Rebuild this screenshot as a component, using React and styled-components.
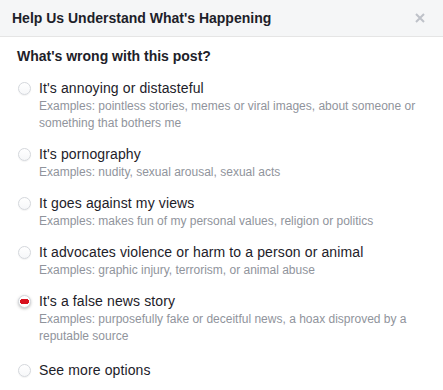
import React from "react";
import styled, { createGlobalStyle } from "styled-components";

const GlobalStyle = createGlobalStyle`
  html, body {
    margin: 0;
    padding: 0;
    background: #fff;
  }
  body {
    font-family: "Liberation Sans", Arial, sans-serif;
    -webkit-font-smoothing: antialiased;
  }
`;

const options = [
    {
        label: "It's annoying or distasteful",
        desc: "Examples: pointless stories, memes or viral images, about someone or something that bothers me",
    },
    { label: "It's pornography", desc: "Examples: nudity, sexual arousal, sexual acts" },
    {
        label: "It goes against my views",
        desc: "Examples: makes fun of my personal values, religion or politics",
    },
    {
        label: "It advocates violence or harm to a person or animal",
        desc: "Examples: graphic injury, terrorism, or animal abuse",
    },
    {
        label: "It's a false news story",
        desc: "Examples: purposefully fake or deceitful news, a hoax disproved by a reputable source",
        checked: true,
    },
    { label: "See more options" },
];

function App() {
    return (
        <Dialog>
            <GlobalStyle />
            <Header>
                <Title>Help Us Understand What's Happening</Title>
                <Close aria-label="Close">
                    <svg width="10" height="10" viewBox="0 0 10 10">
                        <path d="M1 1L9 9M9 1L1 9" stroke="#bec2c9" strokeWidth="2" />
                    </svg>
                </Close>
            </Header>
            <Body>
                <Question>What's wrong with this post?</Question>
                <List>
                    {options.map((o) => (
                        <Option key={o.label} last={!o.desc}>
                            <Radio checked={o.checked} />
                            <Texts>
                                <Label>{o.label}</Label>
                                {o.desc && <Desc>{o.desc}</Desc>}
                            </Texts>
                        </Option>
                    ))}
                </List>
            </Body>
        </Dialog>
    );
}

const Dialog = styled.div`
    width: 443px;
    height: 390px;
    background: #fff;
    overflow: hidden;
`;

const Header = styled.div`
    height: 37px;
    box-sizing: border-box;
    background: #f5f6f7;
    border-bottom: 1px solid #e5e5e5;
    display: flex;
    align-items: center;
    justify-content: space-between;
    padding: 0 12px;
`;

const Title = styled.div`
    font-size: 14px;
    font-weight: bold;
    color: #1d2129;
`;

const Close = styled.div`
    width: 12px;
    height: 12px;
    display: flex;
    align-items: center;
    justify-content: center;
    margin-right: 5px;
`;

const Body = styled.div`
    padding: 10px 17px 0 17px;
`;

const Question = styled.div`
    font-size: 14px;
    font-weight: bold;
    color: #1d2129;
    line-height: 18px;
    margin-bottom: 14px;
`;

const List = styled.div`
    display: flex;
    flex-direction: column;
    gap: 13px;
`;

const Option = styled.div`
    display: flex;
    align-items: flex-start;
    margin-top: ${(p) => (p.last ? "3px" : "0")};
`;

const Radio = styled.span`
    flex: none;
    width: 13px;
    height: 13px;
    margin: 3px 8px 0 1px;
    border-radius: 50%;
    box-sizing: border-box;
    border: 1px solid #d4d7dc;
    background: ${(p) =>
        p.checked
            ? "radial-gradient(ellipse 5px 3px at 50% 50%, #d8121f 90%, transparent 100%), #fff"
            : "linear-gradient(#fff, #f6f7f9)"};
    box-shadow: ${(p) => (p.checked ? "0 1px 3px rgba(0,0,0,0.25)" : "0 1px 1px rgba(0,0,0,0.05)")};
`;

const Texts = styled.div`
    display: flex;
    flex-direction: column;
`;

const Label = styled.div`
    font-size: 14px;
    line-height: 18px;
    letter-spacing: 0.12px;
    color: #1d2129;
`;

const Desc = styled.div`
    font-size: 12px;
    line-height: 17px;
    color: #90949c;
    margin-top: 1px;
`;

export default App;
